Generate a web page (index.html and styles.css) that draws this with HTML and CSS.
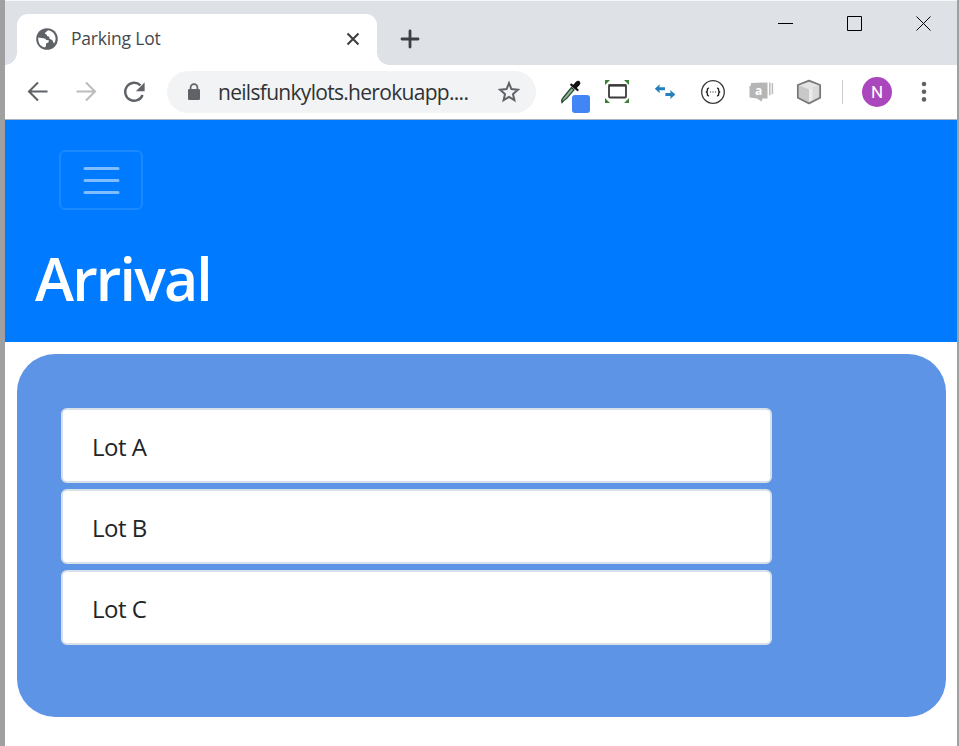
FILE: index.html
```html
<!DOCTYPE html>
<html lang="en">
<head>
<meta charset="utf-8">
<title>Parking Lot</title>
<link rel="stylesheet" href="styles.css">
</head>
<body>
<div class="window">
  <div class="tabstrip">
    <div class="tab">
      <svg class="favicon" width="22" height="22" viewBox="0 0 22 22"><circle cx="11" cy="11" r="10.8" fill="#5f6368"/><path d="M2.3 9.6 L7.3 10.2 Q10 10.2 10.2 12 L12.7 12.3 Q13.2 15 11 15 L10 15.4 V18 L8.8 19.5 Q3 18.3 2.3 12 Z" fill="#fff"/><path d="M12 2.3 Q11 3.6 10 3.9 Q8.8 4.3 9 6 Q10.4 5.8 10.7 7 Q10.8 8.5 13 8.5 Q13 11 15 11.4 Q17 11.8 17 14 L18.2 15.5 Q20.8 11 18.7 7 Q16.5 2.8 12 2.3 Z" fill="#fff"/></svg>
      <span class="tab-title">Parking Lot</span>
      <svg class="tab-close" width="14" height="14" viewBox="0 0 14 14"><path d="M1.5 1.5 12.5 12.5M12.5 1.5 1.5 12.5" stroke="#3c4043" stroke-width="2.1"/></svg>
    </div>
    <svg class="new-tab" width="20" height="20" viewBox="0 0 20 20"><path d="M10 2V18M2 10H18" stroke="#3c4043" stroke-width="2.8" stroke-linecap="round"/></svg>
    <div class="window-controls">
      <svg width="16" height="16" viewBox="0 0 16 16"><path d="M0 7.5H15" stroke="#000"/></svg>
      <svg width="16" height="16" viewBox="0 0 16 16"><path d="M.5 .5H14.5V14.5H.5Z" fill="none" stroke="#000"/></svg>
      <svg width="16" height="16" viewBox="0 0 16 16"><path d="M.5 .5 14.5 14.5M14.5 .5 .5 14.5" stroke="#000" stroke-width="1"/></svg>
    </div>
  </div>

  <div class="toolbar">
    <svg class="tool" viewBox="0 0 48 48"><path d="M33.5 23.5H15.5M24 14.5 15 23.5 24 32.5" fill="none" stroke="#5f6368" stroke-width="2.1"/></svg>
    <svg class="tool" viewBox="0 0 48 48"><path d="M14.5 23.5H32.5M24 14.5 33 23.5 24 32.5" fill="none" stroke="#babcbe" stroke-width="2.1"/></svg>
    <svg class="tool" viewBox="0 0 48 48"><path d="M30.5 17.3A9 9 0 1 0 32.6 27" fill="none" stroke="#5f6368" stroke-width="2.4"/><path d="M34.6 14.5V23.3H25.8Z" fill="#5f6368"/></svg>
    <div class="omnibox">
      <svg class="lock" width="14" height="18" viewBox="0 0 14 18"><rect x="1" y="6" width="12" height="11" rx="1.2" fill="#5f6368"/><path d="M3.6 7V4.5A3.4 3.4 0 0 1 10.4 4.5V7" fill="none" stroke="#5f6368" stroke-width="1.7"/></svg>
      <span class="url">neilsfunkylots.herokuapp....</span>
      <svg class="star" width="24" height="24" viewBox="0 0 24 24"><path d="M12 3.1 14.4 9.1 20.9 9.7 16 14 17.4 20.2 12 16.9 6.6 20.2 8 14 3.1 9.7 9.6 9.1Z" fill="none" stroke="#5f6368" stroke-width="2"/></svg>
    </div>
    <svg class="tool" viewBox="0 0 48 48"><path d="M17 34.6Q16 32 18.3 29.5L26.5 19.5 29 21.8 21.3 30.8Q19 32.2 17 34.6Z" fill="#8fb39a" stroke="#2c4a36" stroke-width="1.3"/><path d="M26.2 16.6 32.6 22" stroke="#111" stroke-width="2.2" stroke-linecap="round"/><path d="M27.6 17.6 30.8 13.9Q33 11.8 34.9 13.5 36.2 15.3 34.4 17.2L31 20.8Z" fill="#111"/><rect x="27" y="27" width="18" height="18" rx="3" fill="#4285f4"/></svg>
    <svg class="tool" viewBox="0 0 48 48"><path d="M12 12H17L12 17ZM36 12V17L31 12ZM12 35V30L17 35ZM36 35H31L36 30Z" fill="#3c8035"/><rect x="16" y="17.3" width="17" height="12.2" rx="1" fill="#fff" stroke="#3b3b3b" stroke-width="1.8"/><path d="M15.5 17.3H33.5" stroke="#3b3b3b" stroke-width="2.4"/></svg>
    <svg class="tool" viewBox="0 0 48 48"><path d="M13.8 20.7 18.8 16.2 18.4 19.2H24V22.2H18.4L18.8 25.2ZM34.4 26.5 29.2 22 29.6 25H24.4V28H29.6L29.2 31Z" fill="#2480bd"/></svg>
    <svg class="tool" viewBox="0 0 48 48"><circle cx="24" cy="24" r="11.3" fill="#fff" stroke="#3b3b3b" stroke-width="1.3"/><path d="M20 20.2Q18.4 20 18.4 21.5 18.6 24 16.8 24 18.6 24 18.4 26.5 18.4 28 20 27.8M28 20.2Q29.6 20 29.6 21.5 29.4 24 31.2 24 29.4 24 29.6 26.5 29.6 28 28 27.8" fill="none" stroke="#222" stroke-width="1.4"/><path d="M20.9 24H22.1M23.4 24H24.6M25.9 24H27.1" stroke="#444" stroke-width="1.2"/></svg>
    <svg class="tool" viewBox="0 0 48 48"><path d="M14 15 30.5 14.5V30.5H25.5L24.5 33.5 20 30.5 12.5 29.5V18L14 17.5Z" fill="#b5b5b5"/><path d="M32.8 14.5V27.3M35.4 15V26.3" stroke="#bcbcbc" stroke-width="1.5"/><text x="18" y="27" class="badge-letter">a</text></svg>
    <svg class="tool" viewBox="0 0 48 48"><path d="M24 12.6 35.2 17V29.7L24 35.4 12.8 29.7V17Z" fill="#c8c8c8" stroke="#777" stroke-width="1.7" stroke-linejoin="round"/><path d="M24 14 33.7 17.6 24 21.5 14.3 17.6Z" fill="#e4e4e4"/><path d="M24 21.5 33.7 17.6V29L24 33.8Z" fill="#dadada"/><path d="M24 21.5 27.5 20V32L24 33.8Z" fill="#ececec"/></svg>
    <span class="divider"></span>
    <span class="avatar">N</span>
    <svg class="more" width="6" height="22" viewBox="0 0 6 22"><circle cx="3" cy="3" r="2.3" fill="#5f6368"/><circle cx="3" cy="10.7" r="2.3" fill="#5f6368"/><circle cx="3" cy="18.4" r="2.3" fill="#5f6368"/></svg>
  </div>

  <header class="page-header">
    <button class="toggler" aria-label="Toggle navigation"><svg width="38" height="30" viewBox="0 0 38 30"><path d="M3 3.5H36M3 15.5H36M3 27.5H36" stroke="#80bdff" stroke-width="3" stroke-linecap="round"/></svg></button>
    <h1>Arrival</h1>
  </header>
  <main class="panel">
    <div class="lot">Lot A</div>
    <div class="lot">Lot B</div>
    <div class="lot">Lot C</div>
  </main>
</div>
</body>
</html>
```
FILE: styles.css
```css
* { box-sizing: border-box; }
body {
  margin: 0;
  overflow: hidden;
  font-family: "Open Sans", "Noto Sans", sans-serif;
  color: #212529;
}
svg { display: block; flex: none; }
.window {
  height: 746px;
  background: #fff;
  border-left: 5px solid #a0a0a0;
  border-right: 2px solid #a0a0a0;
}
.tabstrip {
  display: flex;
  height: 65px;
  padding-left: 12px;
  background: #dee1e6;
  border-top: 1px solid #f6f7f8;
}
.tab {
  position: relative;
  display: flex;
  align-items: center;
  width: 360px;
  height: 51px;
  margin-top: 13px;
  padding: 0 17px 2px 19px;
  background: #fff;
  border-radius: 11px 11px 0 0;
}
.tab::before, .tab::after {
  content: "";
  position: absolute;
  bottom: 0;
  width: 12px;
  height: 12px;
}
.tab::before {
  left: -12px;
  background: radial-gradient(circle at 0 0, transparent 11.5px, #fff 12px);
}
.tab::after {
  right: -12px;
  background: radial-gradient(circle at 100% 0, transparent 11.5px, #fff 12px);
}
.favicon { margin-right: 13px; }
.tab-title {
  flex: 1;
  padding-bottom: 1px;
  font-size: 17.5px;
  font-weight: 400;
  letter-spacing: -0.2px;
  color: #45494d;
}
.new-tab { margin: 28px 0 0 23px; }
.window-controls {
  display: flex;
  gap: 53px;
  margin: 15px 25px 0 auto;
}
.toolbar {
  display: flex;
  align-items: center;
  height: 55px;
  padding-left: 9px;
  border-bottom: 1px solid #a9b5c4;
}
.tool { width: 48px; height: 48px; }
.omnibox {
  display: flex;
  align-items: center;
  width: 369px;
  height: 42px;
  margin: 0 9px;
  padding: 0 15px 0 20px;
  background: #f1f3f4;
  border-radius: 21px;
}
.url {
  flex: 1;
  margin-left: 17px;
  padding-bottom: 1px;
  font-size: 21px;
  letter-spacing: -0.7px;
  white-space: nowrap;
  color: #303236;
}
.badge-letter {
  font: bold 12px "Open Sans", sans-serif;
  fill: #fff;
}
.divider {
  width: 1px;
  height: 24px;
  margin-left: 9px;
  background: #c9cbce;
}
.avatar {
  width: 30px;
  height: 30px;
  margin-left: 19px;
  border-radius: 50%;
  background: #ab47bc;
  color: #fff;
  font: 17px/30px Roboto, sans-serif;
  text-align: center;
}
.more { margin-left: 29px; }
.page-header {
  height: 222px;
  padding: 30px 30px 0;
  background: #007bff;
}
.toggler {
  display: flex;
  align-items: center;
  justify-content: center;
  width: 84px;
  height: 60px;
  margin-left: 24px;
  padding: 0;
  background: none;
  border: 2px solid #1a88ff;
  border-radius: 6px;
}
h1 {
  margin: 32px 0 0;
  font-size: 59px;
  font-weight: 600;
  line-height: 72px;
  letter-spacing: -1.8px;
  color: #fff;
}
.panel {
  display: flex;
  flex-direction: column;
  gap: 6px;
  height: 363px;
  margin: 12px 11px 0 12px;
  padding: 54px 44px;
  background: #5e94e6;
  border-radius: 38px;
}
.lot {
  width: 711px;
  height: 75px;
  padding: 1px 29px 0;
  background: #fff;
  border: 2px solid #d8e0ea;
  border-radius: 6px;
  font-size: 24px;
  line-height: 71px;
  letter-spacing: -0.5px;
}
```
